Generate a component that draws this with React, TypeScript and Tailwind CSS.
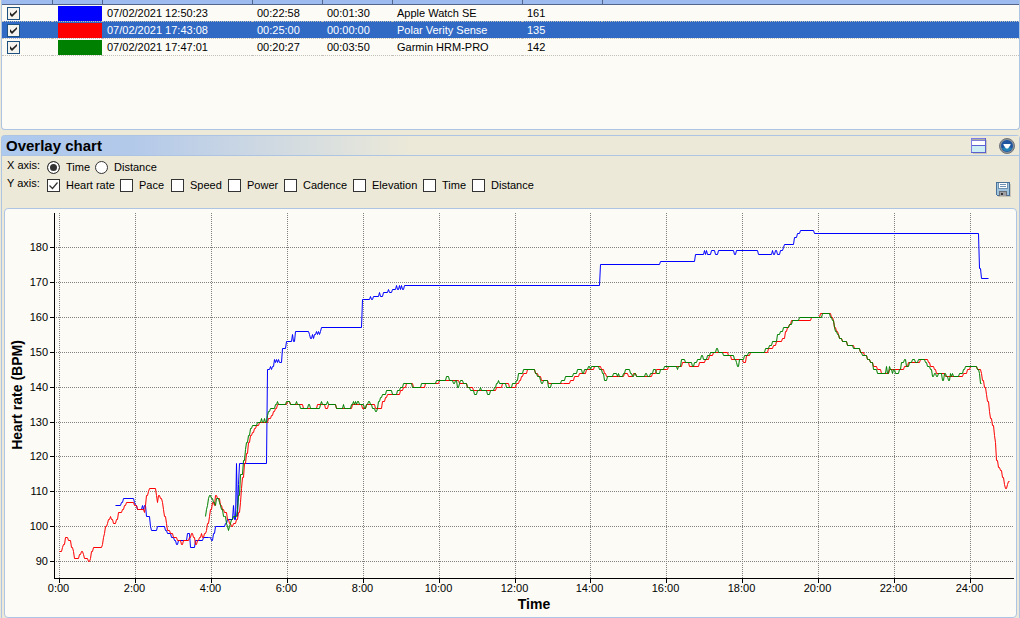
const activities = [
  { color: "bg-[#0000ff]", start: "07/02/2021 12:50:23", duration: "00:22:58", offset: "00:01:30", name: "Apple Watch SE", bpm: 161, selected: false },
  { color: "bg-[#ff0000]", start: "07/02/2021 17:43:08", duration: "00:25:00", offset: "00:00:00", name: "Polar Verity Sense", bpm: 135, selected: true },
  { color: "bg-[#008000]", start: "07/02/2021 17:47:01", duration: "00:20:27", offset: "00:03:50", name: "Garmin HRM-PRO", bpm: 142, selected: false },
];

const columns = [
  { label: "Visible", width: "w-[50px]" },
  { label: "Colour", width: "w-[50px]" },
  { label: "Start time", width: "w-[150px]" },
  { label: "Duration", width: "w-[70px]" },
  { label: "Offset", width: "w-[70px]" },
  { label: "Name", width: "w-[130px]" },
  { label: "Average heart rate", width: "w-[80px]" },
  { label: "Notes", width: "" },
];

const xAxes = [
  { label: "Time", width: "w-12" },
  { label: "Distance", width: "w-16" },
];

const yAxes = [
  { label: "Heart rate", width: "w-[73px]" },
  { label: "Pace", width: "w-[51px]" },
  { label: "Speed", width: "w-[57px]" },
  { label: "Power", width: "w-[56px]" },
  { label: "Cadence", width: "w-[69px]" },
  { label: "Elevation", width: "w-[70px]" },
  { label: "Time", width: "w-[49px]" },
  { label: "Distance", width: "w-16" },
];

// Each entry is "x:bpm", the level holds until the next entry
const series = [
  {
    color: "#0000ff",
    end: 988,
    data: `115:106 121:107 123:108 134:107 135:106 137:105 142:106 143:105 144:106 146:103 150:100 151:99
      157:100 165:99 167:98 171:97 174:96 176:95 178:96 187:98 190:94 195:96 203:97 209:97 211:96 213:98
      215:100 225:101 227:102 233:106 234:102 236:118 237:103 238:112 239:118 267:145 270:146 271:145 272:146 274:148
      275:147 276:148 277:147 278:148 279:147 282:151 286:153 292:155 293:153 295:156 309:155 310:154 312:155
      313:154 314:155 316:156 317:155 318:156 319:155 320:156 321:157 362:165 370:166 371:165 373:166 379:167 380:166
      383:167 388:168 389:167 392:168 396:169 397:168 399:169 400:168 401:169 402:168 404:169 600:175
      660:176 695:178 704:179 705:178 706:179 707:178 711:179 715:178 718:179 734:178 736:179 758:178
      772:179 773:178 775:179 777:178 780:179 783:180 784:181 794:183 797:184 800:185 814:184 979:174 981:171`,
  },
  {
    color: "#ff0000",
    end: 1009,
    data: `59:93 62:94 63:95 65:97 68:96 71:94 73:93 74:91 79:92 81:93 83:92 84:91 88:90 90:91 91:93 93:94
      102:95 103:97 104:98 105:100 107:101 108:102 110:103 111:102 113:101 116:102 118:104 122:105 124:106
      126:107 134:106 137:105 144:104 145:106 146:109 148:110 149:111 156:109 157:107 158:109 160:108
      162:107 163:105 164:103 166:101 167:99 170:98 173:97 177:96 181:95 183:96 189:97 191:98 193:97
      195:95 197:96 199:97 201:98 202:97 204:98 206:99 207:101 209:103 210:105 212:107 214:106 215:109
      217:108 220:106 222:105 224:104 227:102 229:101 231:100 233:101 236:102 238:104 240:107 241:111
      242:114 244:118 246:121 248:124 250:126 252:127 254:128 256:129 259:130 268:131 271:132 273:133
      275:134 277:135 287:136 290:135 303:134 317:135 325:134 328:135 336:134 352:135 362:134 366:135 375:134
      382:136 385:137 387:138 400:139 403:140 406:141 413:140 425:141 439:142 459:141 467:140 473:139
      496:140 502:141 509:140 516:141 519:142 521:143 523:144 527:145 535:144 538:143 541:142 548:141
      563:141 570:142 574:143 579:144 586:145 594:146 601:145 604:144 606:143 624:144 628:143 633:144
      636:143 652:144 656:145 668:146 682:147 689:146 699:147 705:148 709:149 713:150 728:149 731:148
      743:147 746:149 750:150 768:151 773:152 776:153 782:154 785:156 787:157 789:158 791:159 811:160
      820:161 831:160 833:159 834:157 836:156 838:155 839:154 842:153 847:152 854:151 860:150 864:149
      867:148 870:147 873:146 877:145 881:144 889:145 904:146 908:147 920:148 928:147 930:146 934:145
      936:144 945:143 963:144 967:145 970:146 977:145 981:144 982:142 984:140 986:138 987:136 989:133
      990:131 992:129 994:126 995:124 996:119 998:117 1000:116 1002:114 1004:112 1005:111 1007:112 1008:113`,
  },
  {
    color: "#008000",
    end: 981,
    data: `205:103 206:105 207:106 208:108 209:109 211:108 213:107 215:106 216:108 219:107 220:106 221:105
      223:103 225:103 226:101 227:100 228:99 229:100 230:101 231:102 233:103 237:105 238:109 240:115
      243:119 245:122 246:124 248:126 250:128 252:129 257:130 261:131 262:130 264:131 265:130 267:132
      268:133 270:134 275:135 277:136 278:135 286:136 290:135 296:136 297:135 300:134 308:135 310:134 320:135
      321:136 322:135 327:136 328:135 336:134 343:135 344:134 351:135 353:136 354:135 355:136 356:135 357:136 359:135 364:134
      366:135 368:136 370:135 372:134 375:133 377:134 378:136 380:137 382:138 386:139 392:138 397:139
      400:140 403:141 412:140 421:141 436:142 446:143 449:142 453:141 455:142 457:140 459:141 460:142
      463:141 467:140 470:139 474:138 477:139 480:140 481:139 487:138 490:139 494:140 496:141 498:142
      499:141 506:140 512:141 516:142 518:144 523:145 535:144 537:143 540:142 541:141 543:142 548:140
      551:141 561:142 565:143 573:144 577:145 582:144 584:145 588:146 590:145 591:146 599:145 602:144
      604:142 607:143 613:144 617:143 618:144 619:143 623:144 625:145 630:144 632:143 634:144 636:143 645:144 647:143
      650:144 653:145 656:144 660:145 664:146 677:145 678:146 681:148 685:147 692:146 694:147 697:148
      701:149 703:148 707:149 710:150 716:151 718:150 723:149 734:148 736:147 737:146 739:148 744:149
      748:150 765:151 769:152 772:153 777:155 780:156 783:157 789:158 792:159 799:160 822:161 830:160
      832:159 834:157 835:156 837:155 839:154 842:153 847:152 853:151 860:150 862:149 867:148 870:147
      873:145 877:144 886:146 887:144 889:146 890:145 892:144 893:145 895:144 899:145 901:147 904:148
      906:146 909:147 912:148 915:147 918:148 925:147 927:146 930:145 932:143 934:144 936:143 938:144
      942:142 944:144 946:143 948:142 950:144 951:143 952:144 953:143 959:144 963:145 965:146 977:145 979:144 980:141`,
  },
];

const bpmTicks = [180, 170, 160, 150, 140, 130, 120, 110, 100, 90];
const timeTicks = [0, 2, 4, 6, 8, 10, 12, 14, 16, 18, 20, 22, 24];

const bpmToY = (bpm: number) => Math.round(247 + (180 - bpm) * 3.49) + 0.5;
const minuteToX = (minute: number) => Math.round(59 + minute * 37.96) + 0.5;

function toPoints(data: string, end: number) {
  const levels = data.trim().split(/\s+/).map((pair) => pair.split(":").map(Number));
  return levels
    .map(([x, bpm], i) => {
      const next = i < levels.length - 1 ? levels[i + 1][0] - 1 : end;
      return `${x + 0.5},${bpmToY(bpm)} ${next + 0.5},${bpmToY(bpm)}`;
    })
    .join(" ");
}

function OverlayChart() {
  return (
    <svg viewBox="5 209 1011 408" className="block w-full font-['Liberation_Sans',Arial,sans-serif]" role="img" aria-label="Heart rate over time">
      <g stroke="#808080" strokeDasharray="1 1" shapeRendering="crispEdges">
        {bpmTicks.map((bpm) => (
          <line key={bpm} x1="56" x2="1013" y1={bpmToY(bpm)} y2={bpmToY(bpm)} />
        ))}
        {timeTicks.map((t) => (
          <line key={t} x1={minuteToX(t)} x2={minuteToX(t)} y1="213" y2="578" />
        ))}
      </g>

      {series.map(({ color, data, end }) => (
        <polyline key={color} points={toPoints(data, end)} fill="none" stroke={color} />
      ))}

      {/* Axes and ticks */}
      <g stroke="#000" shapeRendering="crispEdges">
        <path d="M54.5 213V578.5H1014" fill="none" />
        {bpmTicks.map((bpm) => (
          <line key={bpm} x1="50" x2="54" y1={bpmToY(bpm)} y2={bpmToY(bpm)} />
        ))}
        {timeTicks.map((t) => (
          <line key={t} x1={minuteToX(t)} x2={minuteToX(t)} y1="578" y2="583" />
        ))}
      </g>

      <g fontSize="11">
        {bpmTicks.map((bpm) => (
          <text key={bpm} x="48" y={bpmToY(bpm) + 3} textAnchor="end">
            {bpm}
          </text>
        ))}
        {timeTicks.map((t) => (
          <text key={t} x={minuteToX(t) - 1} y="592" textAnchor="middle">
            {t}:00
          </text>
        ))}
      </g>
      <g fontSize="14" fontWeight="bold" textAnchor="middle">
        <text x="534" y="609">Time</text>
        <text transform="translate(22 395) rotate(-90)">Heart rate (BPM)</text>
      </g>
    </svg>
  );
}

function LayoutIcon() {
  return (
    <svg width="16" height="16" viewBox="0 0 16 16" shapeRendering="crispEdges" aria-hidden="true">
      <path d="M2 15.5H15.5V2" stroke="#c9c6b8" fill="none" />
      <rect x="1" y="1" width="13" height="13" fill="#fff" />
      <rect x="1" y="8" width="13" height="6" fill="#cdeef2" />
      <rect x="1" y="1" width="13" height="2" fill="#a9aaa0" />
      <path d="M.5 14.5V.5H14" stroke="#7d7de8" fill="none" />
      <path d="M14.5 0V14.5H0M1 7.5H14" stroke="#5a60d0" fill="none" />
      <path d="M1 2.5H14" stroke="#8080d8" fill="none" />
    </svg>
  );
}

function MenuIcon() {
  return (
    <svg width="16" height="16" viewBox="0 0 16 16" aria-hidden="true">
      <circle cx="8" cy="8" r="7.5" fill="#8d9399" stroke="#6e747a" />
      <circle cx="8" cy="8" r="6" fill="#1f569f" />
      <path d="M3 10.5a6 6 0 0 0 10 0L8 8z" fill="#2585b8" />
      <path d="M4.500 6h7v1L9 10.500H7L4.500 7z" fill="#fff" />
    </svg>
  );
}

function SaveIcon() {
  return (
    <svg width="15" height="15" viewBox="0 0 15 15" shapeRendering="crispEdges" aria-hidden="true">
      <path d="M2 14.5H14.5V2" stroke="#c9c6b8" fill="none" />
      <path d="M.5 .5H13.500V13.500H1.500L.5 12.500z" fill="#9fc3dc" stroke="#4a7299" />
      <path d="M3 1h8v6H3z" fill="#fff" />
      <path d="M2.500 1V6.500H11.500V1M4 2.500H10M4 4.500H10" stroke="#6f92b3" fill="none" />
      <path d="M3 9h8v5H3z" fill="#a0a0a4" />
      <path d="M3.500 14V9.500H10.500V14" stroke="#6b7078" fill="none" />
      <path d="M5 11h2v2H5z" fill="#333" />
    </svg>
  );
}

export default function App() {
  return (
    <main className="min-h-screen bg-[#ece9d8] pl-px font-['Liberation_Sans',Arial,sans-serif] text-[11px] leading-4 text-black">
      {/* Activity list */}
      <section className="h-[130px] overflow-hidden rounded-b-sm border border-t-0 border-[#adc4e2] bg-[#fcfbf6]">
        <table className="w-full table-fixed border-collapse leading-[15px]">
          <thead>
            <tr className="h-1 border-b border-[#53658b] bg-[#9ebbf0]">
              {columns.map(({ label, width }) => (
                <th key={label} aria-label={label} className={`${width} border-r border-[#53658b] p-0 last:border-r-0`} />
              ))}
            </tr>
          </thead>
          <tbody>
            {activities.map((a) => (
              <tr
                key={a.name}
                className={`h-[17px] border-b border-dotted border-[#c2c0b8] ${a.selected ? "bg-[#316ac5] text-white" : ""}`}
              >
                <td className="p-0 pt-px pl-[5px]">
                  <label className="grid w-[13px]">
                    <input
                      type="checkbox"
                      defaultChecked
                      aria-label={`Show ${a.name}`}
                      className="peer col-start-1 row-start-1 size-[13px] appearance-none border border-[#1c5180] bg-[#f4f3ee]"
                    />
                    <svg viewBox="0 0 13 13" className="pointer-events-none invisible col-start-1 row-start-1 size-[13px] peer-checked:visible">
                      <path d="M3 5v3l2 2 5-5V3L5 7.500z" fill="#222" />
                    </svg>
                  </label>
                </td>
                <td className="p-0 pt-px pl-1.5">
                  <div className={`h-[15px] ${a.color}`} />
                </td>
                <td className="p-0 pt-px pl-[5px]">{a.start}</td>
                <td className="p-0 pt-px pl-[5px]">{a.duration}</td>
                <td className="p-0 pt-px pl-[5px]">{a.offset}</td>
                <td className="p-0 pt-px pl-[5px]">{a.name}</td>
                <td className="p-0 pt-px pl-[5px]">{a.bpm}</td>
                <td className="p-0" />
              </tr>
            ))}
          </tbody>
        </table>
      </section>

      {/* Overlay chart panel */}
      <section className="mt-[5px] rounded-t-sm border-x border-t border-[#adc4e2]">
        <header className="flex h-5 items-center border-b border-[#adc4e2] bg-linear-to-r from-[#adc9ee] from-0% via-[#b3c9ea] via-[130px] to-[#ece9d8] to-[410px] pl-1">
          <h2 className="flex-1 text-[15px] leading-4 font-bold">Overlay chart</h2>
          <div className="flex gap-3 pr-1">
            <button type="button" aria-label="Change layout">
              <LayoutIcon />
            </button>
            <button type="button" aria-label="Chart menu">
              <MenuIcon />
            </button>
          </div>
        </header>

        <div className="flex h-[52px] items-end pr-2">
          <div className="flex h-full flex-1 flex-col gap-0.5 pt-[3px] pl-[5px]">
            <fieldset className="flex h-4 items-center">
              <legend className="float-left w-10 self-start leading-3">X axis:</legend>
              {xAxes.map(({ label, width }, i) => (
                <label key={label} className={`flex items-center gap-1.5 ${width}`}>
                  <input
                    type="radio"
                    name="x-axis"
                    defaultChecked={i === 0}
                    className="size-[13px] shrink-0 appearance-none rounded-full border border-[#333] bg-white checked:bg-[#333] checked:shadow-[inset_0_0_0_2px_white]"
                  />
                  {label}
                </label>
              ))}
            </fieldset>
            <fieldset className="flex h-4 items-center">
              <legend className="float-left w-10 self-start leading-3">Y axis:</legend>
              {yAxes.map(({ label, width }, i) => (
                <label key={label} className={`flex items-center gap-1.5 whitespace-nowrap ${width}`}>
                  <span className="grid shrink-0">
                    <input
                      type="checkbox"
                      defaultChecked={i === 0}
                      className="peer col-start-1 row-start-1 size-[13px] appearance-none border border-[#333] bg-white"
                    />
                    <svg viewBox="0 0 13 13" className="pointer-events-none invisible col-start-1 row-start-1 size-[13px] peer-checked:visible">
                      <path d="M2.500 6.500l3 3 5-6" fill="none" stroke="#333" strokeWidth="1.200" />
                    </svg>
                  </span>
                  {label}
                </label>
              ))}
            </fieldset>
          </div>
          <button type="button" aria-label="Save chart" className="mb-[11px]">
            <SaveIcon />
          </button>
        </div>

        <div className="mx-0.5 rounded-sm border border-[#adc4e2] bg-[#fcfbf6]">
          <OverlayChart />
        </div>
      </section>
    </main>
  );
}
